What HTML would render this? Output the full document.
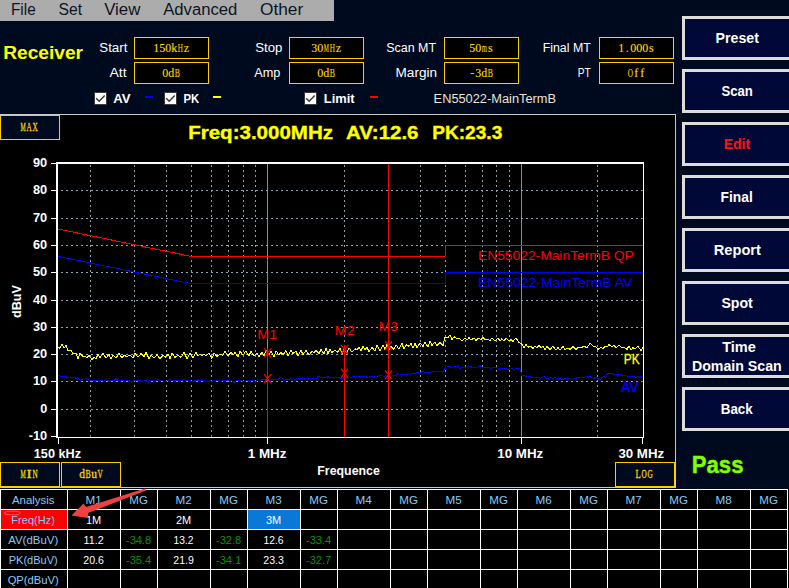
<!DOCTYPE html>
<html><head><meta charset="utf-8"><style>
html,body{margin:0;padding:0;background:#000a1e;width:789px;height:588px;overflow:hidden;}
svg{display:block;}

</style></head><body>
<svg width="789" height="588" viewBox="0 0 789 588"><rect x="0" y="0" width="789" height="588" fill="#000a1e"/>
<rect x="0" y="0" width="334" height="21" fill="#acacac"/>
<text x="11.00" y="14.80" font-size="16" font-weight="normal" fill="#0c1424" text-anchor="start" font-family='"Liberation Sans", sans-serif' textLength="24.7" lengthAdjust="spacingAndGlyphs" >File</text>
<text x="58.60" y="14.80" font-size="16" font-weight="normal" fill="#0c1424" text-anchor="start" font-family='"Liberation Sans", sans-serif' textLength="23.5" lengthAdjust="spacingAndGlyphs" >Set</text>
<text x="104.20" y="14.80" font-size="16" font-weight="normal" fill="#0c1424" text-anchor="start" font-family='"Liberation Sans", sans-serif' textLength="36.2" lengthAdjust="spacingAndGlyphs" >View</text>
<text x="163.20" y="14.80" font-size="16" font-weight="normal" fill="#0c1424" text-anchor="start" font-family='"Liberation Sans", sans-serif' textLength="74.1" lengthAdjust="spacingAndGlyphs" >Advanced</text>
<text x="260.00" y="14.80" font-size="16" font-weight="normal" fill="#0c1424" text-anchor="start" font-family='"Liberation Sans", sans-serif' textLength="43.2" lengthAdjust="spacingAndGlyphs" >Other</text>
<text x="3.20" y="58.80" font-size="19" font-weight="bold" fill="#ffff00" text-anchor="start" font-family='"Liberation Sans", sans-serif' textLength="79.8" lengthAdjust="spacingAndGlyphs" >Receiver</text>
<text x="99.30" y="51.80" font-size="12" font-weight="normal" fill="#ffffff" text-anchor="start" font-family='"Liberation Sans", sans-serif' textLength="28.1" lengthAdjust="spacingAndGlyphs" >Start</text>
<text x="109.40" y="76.80" font-size="12" font-weight="normal" fill="#ffffff" text-anchor="start" font-family='"Liberation Sans", sans-serif' textLength="17.2" lengthAdjust="spacingAndGlyphs" >Att</text>
<text x="255.20" y="51.80" font-size="12" font-weight="normal" fill="#ffffff" text-anchor="start" font-family='"Liberation Sans", sans-serif' textLength="27.2" lengthAdjust="spacingAndGlyphs" >Stop</text>
<text x="254.20" y="76.80" font-size="12" font-weight="normal" fill="#ffffff" text-anchor="start" font-family='"Liberation Sans", sans-serif' textLength="26.1" lengthAdjust="spacingAndGlyphs" >Amp</text>
<text x="386.20" y="51.80" font-size="12" font-weight="normal" fill="#ffffff" text-anchor="start" font-family='"Liberation Sans", sans-serif' textLength="49.9" lengthAdjust="spacingAndGlyphs" >Scan MT</text>
<text x="395.60" y="76.80" font-size="12" font-weight="normal" fill="#ffffff" text-anchor="start" font-family='"Liberation Sans", sans-serif' textLength="41.4" lengthAdjust="spacingAndGlyphs" >Margin</text>
<text x="542.70" y="51.80" font-size="12" font-weight="normal" fill="#ffffff" text-anchor="start" font-family='"Liberation Sans", sans-serif' textLength="48.1" lengthAdjust="spacingAndGlyphs" >Final MT</text>
<text x="577.80" y="76.80" font-size="12" font-weight="normal" fill="#ffffff" text-anchor="start" font-family='"Liberation Sans", sans-serif' textLength="13.0" lengthAdjust="spacingAndGlyphs" >PT</text>
<rect x="134.5" y="37.5" width="74" height="21" fill="#000" stroke="#ffcc00" stroke-width="1"/>
<text x="156.30" y="52.30" font-size="12" font-weight="normal" fill="#ffd800" text-anchor="middle" font-family='"Liberation Serif", serif' stroke="#ffd800" stroke-width="0.12">1</text>
<text x="162.30" y="52.30" font-size="12" font-weight="normal" fill="#ffd800" text-anchor="middle" font-family='"Liberation Serif", serif' stroke="#ffd800" stroke-width="0.12">5</text>
<text x="168.30" y="52.30" font-size="12" font-weight="normal" fill="#ffd800" text-anchor="middle" font-family='"Liberation Serif", serif' stroke="#ffd800" stroke-width="0.12">0</text>
<text x="174.30" y="52.30" font-size="12" font-weight="normal" fill="#ffd800" text-anchor="middle" font-family='"Liberation Serif", serif' stroke="#ffd800" stroke-width="0.12">k</text>
<text x="180.30" y="52.30" font-size="12" font-weight="normal" fill="#ffd800" text-anchor="middle" font-family='"Liberation Serif", serif' textLength="5.2" lengthAdjust="spacingAndGlyphs" stroke="#ffd800" stroke-width="0.12">H</text>
<text x="186.30" y="52.30" font-size="12" font-weight="normal" fill="#ffd800" text-anchor="middle" font-family='"Liberation Serif", serif' stroke="#ffd800" stroke-width="0.12">z</text>
<rect x="134.5" y="62.5" width="74" height="21" fill="#000" stroke="#ffcc00" stroke-width="1"/>
<text x="165.30" y="77.30" font-size="12" font-weight="normal" fill="#ffd800" text-anchor="middle" font-family='"Liberation Serif", serif' stroke="#ffd800" stroke-width="0.12">0</text>
<text x="171.30" y="77.30" font-size="12" font-weight="normal" fill="#ffd800" text-anchor="middle" font-family='"Liberation Serif", serif' stroke="#ffd800" stroke-width="0.12">d</text>
<text x="177.30" y="77.30" font-size="12" font-weight="normal" fill="#ffd800" text-anchor="middle" font-family='"Liberation Serif", serif' textLength="5.2" lengthAdjust="spacingAndGlyphs" stroke="#ffd800" stroke-width="0.12">B</text>
<rect x="289.5" y="37.5" width="74" height="21" fill="#000" stroke="#ffcc00" stroke-width="1"/>
<text x="314.30" y="52.30" font-size="12" font-weight="normal" fill="#ffd800" text-anchor="middle" font-family='"Liberation Serif", serif' stroke="#ffd800" stroke-width="0.12">3</text>
<text x="320.30" y="52.30" font-size="12" font-weight="normal" fill="#ffd800" text-anchor="middle" font-family='"Liberation Serif", serif' stroke="#ffd800" stroke-width="0.12">0</text>
<text x="326.30" y="52.30" font-size="12" font-weight="normal" fill="#ffd800" text-anchor="middle" font-family='"Liberation Serif", serif' textLength="5.2" lengthAdjust="spacingAndGlyphs" stroke="#ffd800" stroke-width="0.12">M</text>
<text x="332.30" y="52.30" font-size="12" font-weight="normal" fill="#ffd800" text-anchor="middle" font-family='"Liberation Serif", serif' textLength="5.2" lengthAdjust="spacingAndGlyphs" stroke="#ffd800" stroke-width="0.12">H</text>
<text x="338.30" y="52.30" font-size="12" font-weight="normal" fill="#ffd800" text-anchor="middle" font-family='"Liberation Serif", serif' stroke="#ffd800" stroke-width="0.12">z</text>
<rect x="289.5" y="62.5" width="74" height="21" fill="#000" stroke="#ffcc00" stroke-width="1"/>
<text x="320.30" y="77.30" font-size="12" font-weight="normal" fill="#ffd800" text-anchor="middle" font-family='"Liberation Serif", serif' stroke="#ffd800" stroke-width="0.12">0</text>
<text x="326.30" y="77.30" font-size="12" font-weight="normal" fill="#ffd800" text-anchor="middle" font-family='"Liberation Serif", serif' stroke="#ffd800" stroke-width="0.12">d</text>
<text x="332.30" y="77.30" font-size="12" font-weight="normal" fill="#ffd800" text-anchor="middle" font-family='"Liberation Serif", serif' textLength="5.2" lengthAdjust="spacingAndGlyphs" stroke="#ffd800" stroke-width="0.12">B</text>
<rect x="444.5" y="37.5" width="74" height="21" fill="#000" stroke="#ffcc00" stroke-width="1"/>
<text x="472.30" y="52.30" font-size="12" font-weight="normal" fill="#ffd800" text-anchor="middle" font-family='"Liberation Serif", serif' stroke="#ffd800" stroke-width="0.12">5</text>
<text x="478.30" y="52.30" font-size="12" font-weight="normal" fill="#ffd800" text-anchor="middle" font-family='"Liberation Serif", serif' stroke="#ffd800" stroke-width="0.12">0</text>
<text x="484.30" y="52.30" font-size="12" font-weight="normal" fill="#ffd800" text-anchor="middle" font-family='"Liberation Serif", serif' textLength="5.2" lengthAdjust="spacingAndGlyphs" stroke="#ffd800" stroke-width="0.12">m</text>
<text x="490.30" y="52.30" font-size="12" font-weight="normal" fill="#ffd800" text-anchor="middle" font-family='"Liberation Serif", serif' stroke="#ffd800" stroke-width="0.12">s</text>
<rect x="444.5" y="62.5" width="74" height="21" fill="#000" stroke="#ffcc00" stroke-width="1"/>
<text x="472.30" y="77.30" font-size="12" font-weight="normal" fill="#ffd800" text-anchor="middle" font-family='"Liberation Serif", serif' stroke="#ffd800" stroke-width="0.12">-</text>
<text x="478.30" y="77.30" font-size="12" font-weight="normal" fill="#ffd800" text-anchor="middle" font-family='"Liberation Serif", serif' stroke="#ffd800" stroke-width="0.12">3</text>
<text x="484.30" y="77.30" font-size="12" font-weight="normal" fill="#ffd800" text-anchor="middle" font-family='"Liberation Serif", serif' stroke="#ffd800" stroke-width="0.12">d</text>
<text x="490.30" y="77.30" font-size="12" font-weight="normal" fill="#ffd800" text-anchor="middle" font-family='"Liberation Serif", serif' textLength="5.2" lengthAdjust="spacingAndGlyphs" stroke="#ffd800" stroke-width="0.12">B</text>
<rect x="599.5" y="37.5" width="74" height="21" fill="#000" stroke="#ffcc00" stroke-width="1"/>
<text x="621.30" y="52.30" font-size="12" font-weight="normal" fill="#ffd800" text-anchor="middle" font-family='"Liberation Serif", serif' stroke="#ffd800" stroke-width="0.12">1</text>
<text x="627.30" y="52.30" font-size="12" font-weight="normal" fill="#ffd800" text-anchor="middle" font-family='"Liberation Serif", serif' stroke="#ffd800" stroke-width="0.12">.</text>
<text x="633.30" y="52.30" font-size="12" font-weight="normal" fill="#ffd800" text-anchor="middle" font-family='"Liberation Serif", serif' stroke="#ffd800" stroke-width="0.12">0</text>
<text x="639.30" y="52.30" font-size="12" font-weight="normal" fill="#ffd800" text-anchor="middle" font-family='"Liberation Serif", serif' stroke="#ffd800" stroke-width="0.12">0</text>
<text x="645.30" y="52.30" font-size="12" font-weight="normal" fill="#ffd800" text-anchor="middle" font-family='"Liberation Serif", serif' stroke="#ffd800" stroke-width="0.12">0</text>
<text x="651.30" y="52.30" font-size="12" font-weight="normal" fill="#ffd800" text-anchor="middle" font-family='"Liberation Serif", serif' stroke="#ffd800" stroke-width="0.12">s</text>
<rect x="599.5" y="62.5" width="74" height="21" fill="#000" stroke="#ffcc00" stroke-width="1"/>
<text x="630.30" y="77.30" font-size="12" font-weight="normal" fill="#ffd800" text-anchor="middle" font-family='"Liberation Serif", serif' textLength="5.2" lengthAdjust="spacingAndGlyphs" stroke="#ffd800" stroke-width="0.12">O</text>
<text x="636.30" y="77.30" font-size="12" font-weight="normal" fill="#ffd800" text-anchor="middle" font-family='"Liberation Serif", serif' stroke="#ffd800" stroke-width="0.12">f</text>
<text x="642.30" y="77.30" font-size="12" font-weight="normal" fill="#ffd800" text-anchor="middle" font-family='"Liberation Serif", serif' stroke="#ffd800" stroke-width="0.12">f</text>
<rect x="94.5" y="92.5" width="12" height="12" fill="#ffffff" stroke="#3a3a3a" stroke-width="1"/>
<polyline points="96.2,98.2 99.2,101.2 104.7,95.4" fill="none" stroke="#3a3a3a" stroke-width="1.5"/>
<text x="113.30" y="102.60" font-size="12" font-weight="bold" fill="#ffffff" text-anchor="start" font-family='"Liberation Sans", sans-serif' textLength="17.4" lengthAdjust="spacingAndGlyphs" >AV</text>
<rect x="145" y="96" width="8" height="2" fill="#0000ff"/>
<rect x="164.5" y="92.5" width="12" height="12" fill="#ffffff" stroke="#3a3a3a" stroke-width="1"/>
<polyline points="166.2,98.2 169.2,101.2 174.7,95.4" fill="none" stroke="#3a3a3a" stroke-width="1.5"/>
<text x="183.50" y="102.60" font-size="12" font-weight="bold" fill="#ffffff" text-anchor="start" font-family='"Liberation Sans", sans-serif' textLength="15.7" lengthAdjust="spacingAndGlyphs" >PK</text>
<rect x="213" y="96" width="8" height="2" fill="#ffff00"/>
<rect x="304.5" y="92.5" width="12" height="12" fill="#ffffff" stroke="#3a3a3a" stroke-width="1"/>
<polyline points="306.2,98.2 309.2,101.2 314.7,95.4" fill="none" stroke="#3a3a3a" stroke-width="1.5"/>
<text x="323.80" y="102.60" font-size="12" font-weight="bold" fill="#ffffff" text-anchor="start" font-family='"Liberation Sans", sans-serif' textLength="30.8" lengthAdjust="spacingAndGlyphs" >Limit</text>
<rect x="370" y="96" width="8" height="2" fill="#ff0000"/>
<text x="433.60" y="102.80" font-size="12" font-weight="normal" fill="#ebe3d3" text-anchor="start" font-family='"Liberation Sans", sans-serif' textLength="122.4" lengthAdjust="spacingAndGlyphs" >EN55022-MainTermB</text>
<rect x="0" y="114" width="676" height="374" fill="#c8c8c8"/>
<rect x="0" y="115" width="675" height="372" fill="#000000"/>
<rect x="0.5" y="115.5" width="59" height="24" fill="#000a1e" stroke="#ffcc00" stroke-width="1"/>
<text x="23.20" y="131.10" font-size="11.5" font-weight="normal" fill="#ffd400" text-anchor="middle" font-family='"Liberation Serif", serif' textLength="5.2" lengthAdjust="spacingAndGlyphs" stroke="#ffd400" stroke-width="0.3">M</text>
<text x="29.20" y="131.10" font-size="11.5" font-weight="normal" fill="#ffd400" text-anchor="middle" font-family='"Liberation Serif", serif' textLength="5.2" lengthAdjust="spacingAndGlyphs" stroke="#ffd400" stroke-width="0.3">A</text>
<text x="35.20" y="131.10" font-size="11.5" font-weight="normal" fill="#ffd400" text-anchor="middle" font-family='"Liberation Serif", serif' textLength="5.2" lengthAdjust="spacingAndGlyphs" stroke="#ffd400" stroke-width="0.3">X</text>
<rect x="0.5" y="462.5" width="59" height="24" fill="#000a1e" stroke="#ffcc00" stroke-width="1"/>
<text x="23.20" y="478.10" font-size="11.5" font-weight="normal" fill="#ffd400" text-anchor="middle" font-family='"Liberation Serif", serif' textLength="5.2" lengthAdjust="spacingAndGlyphs" stroke="#ffd400" stroke-width="0.3">M</text>
<text x="29.20" y="478.10" font-size="11.5" font-weight="normal" fill="#ffd400" text-anchor="middle" font-family='"Liberation Serif", serif' textLength="5.2" lengthAdjust="spacingAndGlyphs" stroke="#ffd400" stroke-width="0.3">I</text>
<text x="35.20" y="478.10" font-size="11.5" font-weight="normal" fill="#ffd400" text-anchor="middle" font-family='"Liberation Serif", serif' textLength="5.2" lengthAdjust="spacingAndGlyphs" stroke="#ffd400" stroke-width="0.3">N</text>
<rect x="61.5" y="462.5" width="59" height="24" fill="#000a1e" stroke="#ffcc00" stroke-width="1"/>
<text x="82.10" y="478.10" font-size="11.5" font-weight="normal" fill="#ffd400" text-anchor="middle" font-family='"Liberation Serif", serif' stroke="#ffd400" stroke-width="0.3">d</text>
<text x="88.10" y="478.10" font-size="11.5" font-weight="normal" fill="#ffd400" text-anchor="middle" font-family='"Liberation Serif", serif' textLength="5.2" lengthAdjust="spacingAndGlyphs" stroke="#ffd400" stroke-width="0.3">B</text>
<text x="94.10" y="478.10" font-size="11.5" font-weight="normal" fill="#ffd400" text-anchor="middle" font-family='"Liberation Serif", serif' stroke="#ffd400" stroke-width="0.3">u</text>
<text x="100.10" y="478.10" font-size="11.5" font-weight="normal" fill="#ffd400" text-anchor="middle" font-family='"Liberation Serif", serif' textLength="5.2" lengthAdjust="spacingAndGlyphs" stroke="#ffd400" stroke-width="0.3">V</text>
<rect x="615.5" y="462.5" width="59" height="24" fill="#000a1e" stroke="#ffcc00" stroke-width="1"/>
<text x="638.20" y="478.10" font-size="11.5" font-weight="normal" fill="#ffd400" text-anchor="middle" font-family='"Liberation Serif", serif' textLength="5.2" lengthAdjust="spacingAndGlyphs" stroke="#ffd400" stroke-width="0.3">L</text>
<text x="644.20" y="478.10" font-size="11.5" font-weight="normal" fill="#ffd400" text-anchor="middle" font-family='"Liberation Serif", serif' textLength="5.2" lengthAdjust="spacingAndGlyphs" stroke="#ffd400" stroke-width="0.3">O</text>
<text x="650.20" y="478.10" font-size="11.5" font-weight="normal" fill="#ffd400" text-anchor="middle" font-family='"Liberation Serif", serif' textLength="5.2" lengthAdjust="spacingAndGlyphs" stroke="#ffd400" stroke-width="0.3">G</text>
<text x="188.20" y="139.30" font-size="18" font-weight="bold" fill="#ffff00" text-anchor="start" font-family='"Liberation Sans", sans-serif' textLength="144.8" lengthAdjust="spacingAndGlyphs" stroke="#ffff00" stroke-width="0.35">Freq:3.000MHz</text>
<text x="346.00" y="139.30" font-size="18" font-weight="bold" fill="#ffff00" text-anchor="start" font-family='"Liberation Sans", sans-serif' textLength="72.5" lengthAdjust="spacingAndGlyphs" stroke="#ffff00" stroke-width="0.35">AV:12.6</text>
<text x="432.20" y="139.30" font-size="18" font-weight="bold" fill="#ffff00" text-anchor="start" font-family='"Liberation Sans", sans-serif' textLength="70.1" lengthAdjust="spacingAndGlyphs" stroke="#ffff00" stroke-width="0.35">PK:23.3</text>
<text x="478.00" y="260.10" font-size="13" font-weight="normal" fill="#ff0000" text-anchor="start" font-family='"Liberation Sans", sans-serif' textLength="155.8" lengthAdjust="spacingAndGlyphs" >EN55022-MainTermB QP</text>
<text x="478.00" y="286.80" font-size="13" font-weight="normal" fill="#0000ff" text-anchor="start" font-family='"Liberation Sans", sans-serif' textLength="154.4" lengthAdjust="spacingAndGlyphs" >EN55022-MainTermB AV</text>
<line x1="90.5" y1="165" x2="90.5" y2="436.6" stroke="#9c9c9c" stroke-width="1" stroke-dasharray="2 3"/>
<line x1="134.5" y1="165" x2="134.5" y2="436.6" stroke="#9c9c9c" stroke-width="1" stroke-dasharray="2 3"/>
<line x1="166.5" y1="165" x2="166.5" y2="436.6" stroke="#9c9c9c" stroke-width="1" stroke-dasharray="2 3"/>
<line x1="191.5" y1="165" x2="191.5" y2="436.6" stroke="#9c9c9c" stroke-width="1" stroke-dasharray="2 3"/>
<line x1="211.5" y1="165" x2="211.5" y2="436.6" stroke="#9c9c9c" stroke-width="1" stroke-dasharray="2 3"/>
<line x1="228.5" y1="165" x2="228.5" y2="436.6" stroke="#9c9c9c" stroke-width="1" stroke-dasharray="2 3"/>
<line x1="243.5" y1="165" x2="243.5" y2="436.6" stroke="#9c9c9c" stroke-width="1" stroke-dasharray="2 3"/>
<line x1="255.5" y1="165" x2="255.5" y2="436.6" stroke="#9c9c9c" stroke-width="1" stroke-dasharray="2 3"/>
<line x1="267.5" y1="163" x2="267.5" y2="436.6" stroke="#7890b0" stroke-width="1"/>
<line x1="344.5" y1="165" x2="344.5" y2="436.6" stroke="#9c9c9c" stroke-width="1" stroke-dasharray="2 3"/>
<line x1="388.5" y1="165" x2="388.5" y2="436.6" stroke="#9c9c9c" stroke-width="1" stroke-dasharray="2 3"/>
<line x1="420.5" y1="165" x2="420.5" y2="436.6" stroke="#9c9c9c" stroke-width="1" stroke-dasharray="2 3"/>
<line x1="445.5" y1="165" x2="445.5" y2="436.6" stroke="#9c9c9c" stroke-width="1" stroke-dasharray="2 3"/>
<line x1="465.5" y1="165" x2="465.5" y2="436.6" stroke="#9c9c9c" stroke-width="1" stroke-dasharray="2 3"/>
<line x1="482.5" y1="165" x2="482.5" y2="436.6" stroke="#9c9c9c" stroke-width="1" stroke-dasharray="2 3"/>
<line x1="496.5" y1="165" x2="496.5" y2="436.6" stroke="#9c9c9c" stroke-width="1" stroke-dasharray="2 3"/>
<line x1="509.5" y1="165" x2="509.5" y2="436.6" stroke="#9c9c9c" stroke-width="1" stroke-dasharray="2 3"/>
<line x1="521.5" y1="163" x2="521.5" y2="436.6" stroke="#7890b0" stroke-width="1"/>
<line x1="597.5" y1="165" x2="597.5" y2="436.6" stroke="#9c9c9c" stroke-width="1" stroke-dasharray="2 3"/>
<line x1="61" y1="190.5" x2="642.6" y2="190.5" stroke="#92a6bc" stroke-width="1" stroke-dasharray="2 3"/>
<line x1="61" y1="218.5" x2="642.6" y2="218.5" stroke="#92a6bc" stroke-width="1" stroke-dasharray="2 3"/>
<line x1="61" y1="245.5" x2="642.6" y2="245.5" stroke="#92a6bc" stroke-width="1" stroke-dasharray="2 3"/>
<line x1="61" y1="272.5" x2="642.6" y2="272.5" stroke="#92a6bc" stroke-width="1" stroke-dasharray="2 3"/>
<line x1="61" y1="300.5" x2="642.6" y2="300.5" stroke="#92a6bc" stroke-width="1" stroke-dasharray="2 3"/>
<line x1="61" y1="327.5" x2="642.6" y2="327.5" stroke="#92a6bc" stroke-width="1" stroke-dasharray="2 3"/>
<line x1="61" y1="354.5" x2="642.6" y2="354.5" stroke="#92a6bc" stroke-width="1" stroke-dasharray="2 3"/>
<line x1="61" y1="381.5" x2="642.6" y2="381.5" stroke="#92a6bc" stroke-width="1" stroke-dasharray="2 3"/>
<line x1="61" y1="409.5" x2="642.6" y2="409.5" stroke="#92a6bc" stroke-width="1" stroke-dasharray="2 3"/>
<rect x="56" y="162" width="588" height="2" fill="#ffffff"/>
<rect x="56" y="162" width="2" height="276" fill="#ffffff"/>
<rect x="643" y="162" width="1" height="276" fill="#ffffff"/>
<rect x="56" y="437" width="588" height="1" fill="#ffffff"/>
<rect x="51" y="163" width="6" height="1" fill="#ffffff"/>
<text x="47.20" y="167.20" font-size="12.5" font-weight="bold" fill="#ffffff" text-anchor="end" font-family='"Liberation Sans", sans-serif' textLength="14.2" lengthAdjust="spacingAndGlyphs" >90</text>
<rect x="51" y="190" width="6" height="1" fill="#ffffff"/>
<text x="47.20" y="194.20" font-size="12.5" font-weight="bold" fill="#ffffff" text-anchor="end" font-family='"Liberation Sans", sans-serif' textLength="14.2" lengthAdjust="spacingAndGlyphs" >80</text>
<rect x="51" y="218" width="6" height="1" fill="#ffffff"/>
<text x="47.20" y="222.20" font-size="12.5" font-weight="bold" fill="#ffffff" text-anchor="end" font-family='"Liberation Sans", sans-serif' textLength="14.2" lengthAdjust="spacingAndGlyphs" >70</text>
<rect x="51" y="245" width="6" height="1" fill="#ffffff"/>
<text x="47.20" y="249.20" font-size="12.5" font-weight="bold" fill="#ffffff" text-anchor="end" font-family='"Liberation Sans", sans-serif' textLength="14.2" lengthAdjust="spacingAndGlyphs" >60</text>
<rect x="51" y="272" width="6" height="1" fill="#ffffff"/>
<text x="47.20" y="276.20" font-size="12.5" font-weight="bold" fill="#ffffff" text-anchor="end" font-family='"Liberation Sans", sans-serif' textLength="14.2" lengthAdjust="spacingAndGlyphs" >50</text>
<rect x="51" y="300" width="6" height="1" fill="#ffffff"/>
<text x="47.20" y="304.20" font-size="12.5" font-weight="bold" fill="#ffffff" text-anchor="end" font-family='"Liberation Sans", sans-serif' textLength="14.2" lengthAdjust="spacingAndGlyphs" >40</text>
<rect x="51" y="327" width="6" height="1" fill="#ffffff"/>
<text x="47.20" y="331.20" font-size="12.5" font-weight="bold" fill="#ffffff" text-anchor="end" font-family='"Liberation Sans", sans-serif' textLength="14.2" lengthAdjust="spacingAndGlyphs" >30</text>
<rect x="51" y="354" width="6" height="1" fill="#ffffff"/>
<text x="47.20" y="358.20" font-size="12.5" font-weight="bold" fill="#ffffff" text-anchor="end" font-family='"Liberation Sans", sans-serif' textLength="14.2" lengthAdjust="spacingAndGlyphs" >20</text>
<rect x="51" y="381" width="6" height="1" fill="#ffffff"/>
<text x="47.20" y="385.20" font-size="12.5" font-weight="bold" fill="#ffffff" text-anchor="end" font-family='"Liberation Sans", sans-serif' textLength="14.2" lengthAdjust="spacingAndGlyphs" >10</text>
<rect x="51" y="409" width="6" height="1" fill="#ffffff"/>
<text x="47.20" y="413.20" font-size="12.5" font-weight="bold" fill="#ffffff" text-anchor="end" font-family='"Liberation Sans", sans-serif' textLength="7.0" lengthAdjust="spacingAndGlyphs" >0</text>
<rect x="51" y="436" width="6" height="1" fill="#ffffff"/>
<text x="47.20" y="440.20" font-size="12.5" font-weight="bold" fill="#ffffff" text-anchor="end" font-family='"Liberation Sans", sans-serif' textLength="18.5" lengthAdjust="spacingAndGlyphs" >-10</text>
<rect x="58" y="438" width="1" height="6" fill="#ffffff"/>
<rect x="267" y="438" width="1" height="6" fill="#ffffff"/>
<rect x="521" y="438" width="1" height="6" fill="#ffffff"/>
<rect x="642" y="438" width="1" height="6" fill="#ffffff"/>
<text x="33.80" y="458.00" font-size="12.5" font-weight="bold" fill="#ffffff" text-anchor="start" font-family='"Liberation Sans", sans-serif' textLength="47.2" lengthAdjust="spacingAndGlyphs" >150 kHz</text>
<text x="247.70" y="458.00" font-size="12.5" font-weight="bold" fill="#ffffff" text-anchor="start" font-family='"Liberation Sans", sans-serif' textLength="38.8" lengthAdjust="spacingAndGlyphs" >1 MHz</text>
<text x="497.30" y="458.00" font-size="12.5" font-weight="bold" fill="#ffffff" text-anchor="start" font-family='"Liberation Sans", sans-serif' textLength="46.0" lengthAdjust="spacingAndGlyphs" >10 MHz</text>
<text x="618.40" y="458.00" font-size="12.5" font-weight="bold" fill="#ffffff" text-anchor="start" font-family='"Liberation Sans", sans-serif' textLength="45.8" lengthAdjust="spacingAndGlyphs" >30 MHz</text>
<text x="317.30" y="475.30" font-size="12.5" font-weight="bold" fill="#ffffff" text-anchor="start" font-family='"Liberation Sans", sans-serif' textLength="62.5" lengthAdjust="spacingAndGlyphs" >Frequence</text>
<text x="0" y="0" font-size="12" font-weight="bold" fill="#ffffff" font-family='"Liberation Sans", sans-serif' textLength="33" lengthAdjust="spacingAndGlyphs" text-anchor="middle" transform="translate(21.4,301.5) rotate(-90)">dBuV</text>
<polyline points="58.5,229.1 191.2,256.4 445.0,256.4 445.0,245.5 642.5,245.5" fill="none" stroke="#ff0000" stroke-width="1" shape-rendering="crispEdges"/>
<polyline points="58.5,256.4 191.2,283.7 445.0,283.7 445.0,272.8 642.5,272.8" fill="none" stroke="#0000ff" stroke-width="1" shape-rendering="crispEdges"/>
<polyline points="58.0,347.2 60.0,348.3 62.0,344.2 64.0,348.2 66.0,345.2 68.0,350.8 71.0,350.0 73.0,353.4 76.0,353.6 78.0,358.5 80.0,353.4 83.0,356.6 85.0,355.9 87.0,358.1 89.0,355.1 92.0,359.9 94.0,356.9 96.0,358.6 98.0,354.4 100.0,357.9 103.0,353.2 106.0,358.2 109.0,354.4 111.0,358.8 113.0,355.3 116.0,358.0 119.0,353.3 122.0,358.2 124.0,355.1 127.0,356.8 130.0,355.0 133.0,357.6 135.0,353.1 138.0,357.3 141.0,353.6 144.0,356.5 146.0,352.5 149.0,358.4 151.0,355.2 154.0,358.2 157.0,354.5 160.0,358.9 163.0,355.3 166.0,357.3 168.0,353.8 170.0,358.5 172.0,353.1 175.0,357.4 178.0,355.1 181.0,357.3 184.0,352.5 187.0,358.6 190.0,352.9 193.0,358.0 196.0,352.0 198.0,356.0 200.0,354.2 202.0,355.7 204.0,354.0 206.0,356.0 209.0,352.8 212.0,358.4 214.0,353.2 217.0,356.5 220.0,354.1 223.0,355.4 225.0,351.3 228.0,355.6 231.0,352.3 233.0,355.0 235.0,352.5 238.0,356.8 240.0,351.3 243.0,355.2 246.0,350.9 249.0,356.1 251.0,351.1 254.0,356.0 257.0,353.4 259.0,356.7 262.0,352.0 264.0,355.9 266.0,350.5 269.0,354.6 271.0,350.9 274.0,356.9 276.0,350.8 279.0,355.3 281.0,351.7 283.0,355.1 286.0,350.6 288.0,355.7 291.0,350.0 293.0,353.6 296.0,351.0 298.0,355.9 301.0,350.4 303.0,354.7 306.0,350.2 309.0,355.2 312.0,351.1 314.0,352.7 316.0,350.1 319.0,353.8 321.0,349.4 324.0,354.1 326.0,348.1 328.0,354.2 330.0,349.0 332.0,352.6 335.0,350.0 338.0,352.4 340.0,347.8 342.0,353.8 344.0,349.4 347.0,353.0 349.0,347.7 352.0,352.2 355.0,348.7 357.0,349.9 359.0,347.3 361.0,351.0 363.0,346.1 365.0,349.4 367.0,347.5 369.0,351.5 372.0,347.3 375.0,351.3 377.0,345.0 380.0,351.2 383.0,344.9 385.0,349.8 387.0,344.5 389.0,349.7 391.0,346.3 394.0,349.3 396.0,344.7 399.0,349.1 402.0,343.5 404.0,349.3 406.0,344.8 409.0,346.3 411.0,343.6 413.0,348.2 415.0,343.5 417.0,347.6 420.0,342.8 423.0,346.5 425.0,341.8 428.0,347.3 430.0,340.9 432.0,345.4 435.0,341.7 437.0,345.7 440.0,342.4 443.0,345.5 445.0,337.4 448.0,337.6 450.0,335.0 452.0,339.4 454.0,336.7 457.0,339.0 459.0,337.9 462.0,341.1 465.0,337.9 467.0,340.1 469.0,337.3 471.0,340.1 474.0,337.9 476.0,340.4 479.0,337.9 481.0,340.0 483.0,337.2 485.0,340.0 488.0,339.1 490.0,340.5 492.0,337.7 495.0,340.9 498.0,338.1 500.0,340.8 502.0,338.7 504.0,340.9 506.0,338.5 509.0,340.7 511.0,339.7 513.0,341.5 516.0,338.0 519.0,342.6 522.0,344.3 524.0,347.5 526.0,344.0 528.0,347.3 530.0,345.8 533.0,348.4 535.0,346.0 537.0,348.1 539.0,345.0 541.0,347.9 543.0,346.3 545.0,350.0 547.0,346.3 550.0,349.8 553.0,346.0 556.0,350.2 558.0,347.5 560.0,349.9 563.0,346.6 565.0,349.4 568.0,348.0 570.0,349.4 573.0,346.3 576.0,349.4 579.0,346.9 581.0,347.8 584.0,346.2 587.0,347.8 590.0,343.3 593.0,346.0 595.0,346.2 598.0,349.3 601.0,347.3 603.0,348.8 605.0,346.6 607.0,347.1 609.0,344.6 612.0,346.6 614.0,345.4 616.0,347.9 619.0,344.8 622.0,347.8 624.0,346.9 627.0,349.5 629.0,345.7 631.0,350.0 633.0,347.6 635.0,349.0 638.0,346.4 641.0,350.8 643.0,347.3" fill="none" stroke="#ffff00" stroke-width="1" shape-rendering="crispEdges"/>
<polyline points="58.0,375.3 60.0,376.1 62.0,376.2 64.0,376.3 66.0,376.7 68.0,377.9 70.0,377.2 72.0,377.6 74.0,377.7 76.0,378.1 78.0,377.9 80.0,380.2 82.0,379.2 84.0,380.0 86.0,378.3 88.0,379.9 90.0,380.3 92.0,380.1 94.0,380.1 96.0,380.6 98.0,380.9 100.0,380.6 102.0,380.3 104.0,380.6 106.0,379.7 108.0,380.6 110.0,382.0 112.0,380.2 114.0,380.4 116.0,378.7 118.0,380.4 120.0,380.4 122.0,380.2 124.0,380.4 126.0,380.4 128.0,380.3 130.0,381.3 132.0,382.3 134.0,380.4 136.0,380.4 138.0,380.0 140.0,380.6 142.0,381.6 144.0,380.7 146.0,380.5 148.0,382.3 150.0,380.6 152.0,380.3 154.0,380.6 156.0,380.7 158.0,378.9 160.0,380.4 162.0,380.5 164.0,381.7 166.0,381.9 168.0,380.5 170.0,379.5 172.0,380.7 174.0,380.6 176.0,380.7 178.0,380.6 180.0,379.8 182.0,380.9 184.0,379.3 186.0,380.7 188.0,380.7 190.0,380.5 192.0,381.5 194.0,380.9 196.0,380.7 198.0,379.8 200.0,380.8 202.0,381.0 204.0,380.6 206.0,381.0 208.0,381.2 210.0,380.6 212.0,381.2 214.0,380.9 216.0,381.1 218.0,379.8 220.0,381.2 222.0,381.0 224.0,380.9 226.0,380.7 228.0,380.8 230.0,381.1 232.0,380.8 234.0,382.4 236.0,380.1 238.0,380.9 240.0,380.5 242.0,381.0 244.0,381.2 246.0,381.1 248.0,380.6 250.0,381.2 252.0,379.8 254.0,380.7 256.0,382.3 258.0,379.1 260.0,380.2 262.0,379.8 264.0,379.2 266.0,379.7 268.0,379.5 270.0,380.3 272.0,379.7 274.0,379.5 276.0,379.2 278.0,379.7 280.0,377.6 282.0,377.9 284.0,380.9 286.0,379.3 288.0,379.4 290.0,378.9 292.0,379.2 294.0,380.6 296.0,378.9 298.0,378.0 300.0,379.1 302.0,377.8 304.0,378.6 306.0,378.4 308.0,378.4 310.0,378.5 312.0,378.6 314.0,378.5 316.0,378.9 318.0,376.7 320.0,376.8 322.0,378.1 324.0,377.3 326.0,378.0 328.0,376.6 330.0,378.1 332.0,377.6 334.0,377.6 336.0,377.8 338.0,377.9 340.0,377.9 342.0,378.3 344.0,377.7 346.0,377.6 348.0,377.3 350.0,377.2 352.0,377.0 354.0,376.4 356.0,376.0 358.0,376.8 360.0,376.7 362.0,376.1 364.0,377.1 366.0,376.5 368.0,378.0 370.0,376.7 372.0,376.6 374.0,377.3 376.0,376.3 378.0,376.1 380.0,375.4 382.0,375.2 384.0,376.4 386.0,375.8 388.0,376.0 390.0,375.5 392.0,375.7 394.0,375.6 396.0,375.9 398.0,373.2 400.0,374.9 402.0,374.3 404.0,374.5 406.0,374.9 408.0,373.7 410.0,374.2 412.0,373.7 414.0,373.4 416.0,373.0 418.0,372.6 420.0,373.9 422.0,371.0 424.0,372.2 426.0,372.4 428.0,372.0 430.0,372.2 432.0,371.7 434.0,372.1 436.0,371.4 438.0,371.8 440.0,371.4 442.0,371.7 444.0,371.1 446.0,365.6 448.0,366.7 450.0,366.2 452.0,367.4 454.0,366.7 456.0,366.7 458.0,365.2 460.0,368.4 462.0,367.2 464.0,367.2 466.0,368.0 468.0,367.2 470.0,365.9 472.0,367.3 474.0,367.1 476.0,367.4 478.0,366.4 480.0,365.7 482.0,367.4 484.0,367.8 486.0,367.8 488.0,367.7 490.0,368.0 492.0,368.0 494.0,367.8 496.0,368.0 498.0,367.9 500.0,369.3 502.0,368.3 504.0,368.5 506.0,368.3 508.0,369.5 510.0,369.6 512.0,368.3 514.0,370.1 516.0,368.4 518.0,368.7 520.0,368.6 522.0,375.7 524.0,375.7 526.0,376.6 528.0,376.0 530.0,376.2 532.0,377.5 534.0,378.0 536.0,377.2 538.0,377.0 540.0,378.2 542.0,377.6 544.0,375.9 546.0,379.0 548.0,378.2 550.0,377.7 552.0,378.0 554.0,378.0 556.0,377.9 558.0,378.4 560.0,378.6 562.0,379.8 564.0,378.9 566.0,378.7 568.0,378.8 570.0,379.0 572.0,379.2 574.0,378.8 576.0,378.2 578.0,377.3 580.0,377.9 582.0,377.4 584.0,377.5 586.0,376.7 588.0,376.7 590.0,376.6 592.0,377.3 594.0,378.5 596.0,377.0 598.0,378.7 600.0,380.5 602.0,377.5 604.0,376.8 606.0,375.2 608.0,373.7 610.0,373.8 612.0,373.1 614.0,374.3 616.0,374.2 618.0,375.3 620.0,374.1 622.0,375.6 624.0,375.9 626.0,375.7 628.0,376.4 630.0,376.2 632.0,376.3 634.0,376.7 636.0,377.4 638.0,376.6 640.0,376.7 642.0,377.3" fill="none" stroke="#0000ff" stroke-width="1" shape-rendering="crispEdges"/>
<text x="623.80" y="364.20" font-size="14" font-weight="normal" fill="#ffff00" text-anchor="start" font-family='"Liberation Sans", sans-serif' textLength="15.9" lengthAdjust="spacingAndGlyphs" stroke="#ffff00" stroke-width="0.3">PK</text>
<text x="621.00" y="391.80" font-size="14" font-weight="normal" fill="#0000ff" text-anchor="start" font-family='"Liberation Sans", sans-serif' textLength="17.5" lengthAdjust="spacingAndGlyphs" stroke="#0000ff" stroke-width="0.3">AV</text>
<line x1="267.5" y1="348.49260000000004" x2="267.5" y2="437" stroke="#ff0000" stroke-width="1"/>
<path d="M264.0,348.49260000000004 L271.0,357.49260000000004 M271.0,348.49260000000004 L264.0,357.49260000000004" stroke="#ff0000" stroke-width="1.2" fill="none"/>
<path d="M264.0,374.1452 L271.0,383.1452 M271.0,374.1452 L264.0,383.1452" stroke="#ff0000" stroke-width="1.2" fill="none"/>
<text x="257.30" y="339.00" font-size="13.5" font-weight="normal" fill="#ff0000" text-anchor="start" font-family='"Liberation Sans", sans-serif' textLength="19.8" lengthAdjust="spacingAndGlyphs" >M1</text>
<line x1="344.5" y1="344.94489999999996" x2="344.5" y2="437" stroke="#ff0000" stroke-width="1"/>
<path d="M341.0,344.94489999999996 L348.0,353.94489999999996 M348.0,344.94489999999996 L341.0,353.94489999999996" stroke="#ff0000" stroke-width="1.2" fill="none"/>
<path d="M341.0,368.68719999999996 L348.0,377.68719999999996 M348.0,368.68719999999996 L341.0,377.68719999999996" stroke="#ff0000" stroke-width="1.2" fill="none"/>
<text x="334.80" y="334.90" font-size="13.5" font-weight="normal" fill="#ff0000" text-anchor="start" font-family='"Liberation Sans", sans-serif' textLength="19.8" lengthAdjust="spacingAndGlyphs" >M2</text>
<line x1="388.5" y1="164" x2="388.5" y2="437" stroke="#ff0000" stroke-width="1"/>
<path d="M385.0,341.1243 L392.0,350.1243 M392.0,341.1243 L385.0,350.1243" stroke="#ff0000" stroke-width="1.2" fill="none"/>
<path d="M385.0,370.32460000000003 L392.0,379.32460000000003 M392.0,370.32460000000003 L385.0,379.32460000000003" stroke="#ff0000" stroke-width="1.2" fill="none"/>
<text x="378.70" y="330.80" font-size="13.5" font-weight="normal" fill="#ff0000" text-anchor="start" font-family='"Liberation Sans", sans-serif' textLength="19.2" lengthAdjust="spacingAndGlyphs" >M3</text>
<rect x="682" y="16" width="120" height="44" fill="#dcdcdc"/>
<rect x="685" y="19" width="120" height="38" fill="#000838"/>
<text x="715.60" y="43.00" font-size="14" font-weight="bold" fill="#ffffff" text-anchor="start" font-family='"Liberation Sans", sans-serif' textLength="43.3" lengthAdjust="spacingAndGlyphs" >Preset</text>
<rect x="682" y="69" width="120" height="44" fill="#dcdcdc"/>
<rect x="685" y="72" width="120" height="38" fill="#000838"/>
<text x="721.40" y="96.00" font-size="14" font-weight="bold" fill="#ffffff" text-anchor="start" font-family='"Liberation Sans", sans-serif' textLength="31.4" lengthAdjust="spacingAndGlyphs" >Scan</text>
<rect x="682" y="122" width="120" height="44" fill="#dcdcdc"/>
<rect x="685" y="125" width="120" height="38" fill="#000838"/>
<text x="723.70" y="149.00" font-size="14" font-weight="bold" fill="#ff1010" text-anchor="start" font-family='"Liberation Sans", sans-serif' textLength="26.5" lengthAdjust="spacingAndGlyphs" >Edit</text>
<rect x="682" y="175" width="120" height="44" fill="#dcdcdc"/>
<rect x="685" y="178" width="120" height="38" fill="#000838"/>
<text x="720.60" y="202.00" font-size="14" font-weight="bold" fill="#ffffff" text-anchor="start" font-family='"Liberation Sans", sans-serif' textLength="32.2" lengthAdjust="spacingAndGlyphs" >Final</text>
<rect x="682" y="228" width="120" height="44" fill="#dcdcdc"/>
<rect x="685" y="231" width="120" height="38" fill="#000838"/>
<text x="713.80" y="255.00" font-size="14" font-weight="bold" fill="#ffffff" text-anchor="start" font-family='"Liberation Sans", sans-serif' textLength="47.1" lengthAdjust="spacingAndGlyphs" >Report</text>
<rect x="682" y="281" width="120" height="44" fill="#dcdcdc"/>
<rect x="685" y="284" width="120" height="38" fill="#000838"/>
<text x="721.40" y="308.00" font-size="14" font-weight="bold" fill="#ffffff" text-anchor="start" font-family='"Liberation Sans", sans-serif' textLength="31.4" lengthAdjust="spacingAndGlyphs" >Spot</text>
<rect x="682" y="334" width="120" height="44" fill="#dcdcdc"/>
<rect x="685" y="337" width="120" height="38" fill="#000838"/>
<rect x="682" y="387" width="120" height="44" fill="#dcdcdc"/>
<rect x="685" y="390" width="120" height="38" fill="#000838"/>
<text x="720.70" y="414.00" font-size="14" font-weight="bold" fill="#ffffff" text-anchor="start" font-family='"Liberation Sans", sans-serif' textLength="32.1" lengthAdjust="spacingAndGlyphs" >Back</text>
<text x="722.20" y="351.50" font-size="14" font-weight="bold" fill="#ffffff" text-anchor="start" font-family='"Liberation Sans", sans-serif' textLength="33.7" lengthAdjust="spacingAndGlyphs" >Time</text>
<text x="691.90" y="370.50" font-size="14" font-weight="bold" fill="#ffffff" text-anchor="start" font-family='"Liberation Sans", sans-serif' textLength="89.9" lengthAdjust="spacingAndGlyphs" >Domain Scan</text>
<text x="691.70" y="472.90" font-size="24" font-weight="bold" fill="#80ff00" text-anchor="start" font-family='"Liberation Sans", sans-serif' textLength="51.8" lengthAdjust="spacingAndGlyphs" stroke="#80ff00" stroke-width="0.4">Pass</text>
<rect x="0" y="489" width="789" height="99" fill="#000000"/>
<rect x="0" y="489" width="1" height="99" fill="#ffffff"/>
<rect x="67" y="489" width="1" height="99" fill="#ffffff"/>
<rect x="120" y="489" width="1" height="99" fill="#ffffff"/>
<rect x="157" y="489" width="1" height="99" fill="#ffffff"/>
<rect x="210" y="489" width="1" height="99" fill="#ffffff"/>
<rect x="247" y="489" width="1" height="99" fill="#ffffff"/>
<rect x="300" y="489" width="1" height="99" fill="#ffffff"/>
<rect x="337" y="489" width="1" height="99" fill="#ffffff"/>
<rect x="390" y="489" width="1" height="99" fill="#ffffff"/>
<rect x="427" y="489" width="1" height="99" fill="#ffffff"/>
<rect x="480" y="489" width="1" height="99" fill="#ffffff"/>
<rect x="517" y="489" width="1" height="99" fill="#ffffff"/>
<rect x="570" y="489" width="1" height="99" fill="#ffffff"/>
<rect x="607" y="489" width="1" height="99" fill="#ffffff"/>
<rect x="660" y="489" width="1" height="99" fill="#ffffff"/>
<rect x="697" y="489" width="1" height="99" fill="#ffffff"/>
<rect x="750" y="489" width="1" height="99" fill="#ffffff"/>
<rect x="787" y="489" width="1" height="99" fill="#ffffff"/>
<rect x="0" y="489" width="788" height="1" fill="#ffffff"/>
<rect x="0" y="509" width="788" height="1" fill="#ffffff"/>
<rect x="0" y="529" width="788" height="1" fill="#ffffff"/>
<rect x="0" y="549" width="788" height="1" fill="#ffffff"/>
<rect x="0" y="569" width="788" height="1" fill="#ffffff"/>
<rect x="1" y="510" width="66" height="19" fill="#ff0000"/>
<rect x="248" y="510" width="52" height="19" fill="#0a78d7"/>
<text x="33.20" y="504.00" font-size="11" font-weight="normal" fill="#86cbf8" text-anchor="middle" font-family='"Liberation Sans", sans-serif' textLength="42.6" lengthAdjust="spacingAndGlyphs" >Analysis</text>
<text x="93.60" y="504.00" font-size="11" font-weight="normal" fill="#86cbf8" text-anchor="middle" font-family='"Liberation Sans", sans-serif' textLength="16.2" lengthAdjust="spacingAndGlyphs" >M1</text>
<text x="138.60" y="504.00" font-size="11" font-weight="normal" fill="#86cbf8" text-anchor="middle" font-family='"Liberation Sans", sans-serif' textLength="18.6" lengthAdjust="spacingAndGlyphs" >MG</text>
<text x="183.60" y="504.00" font-size="11" font-weight="normal" fill="#86cbf8" text-anchor="middle" font-family='"Liberation Sans", sans-serif' textLength="16.2" lengthAdjust="spacingAndGlyphs" >M2</text>
<text x="228.60" y="504.00" font-size="11" font-weight="normal" fill="#86cbf8" text-anchor="middle" font-family='"Liberation Sans", sans-serif' textLength="18.6" lengthAdjust="spacingAndGlyphs" >MG</text>
<text x="273.60" y="504.00" font-size="11" font-weight="normal" fill="#86cbf8" text-anchor="middle" font-family='"Liberation Sans", sans-serif' textLength="16.2" lengthAdjust="spacingAndGlyphs" >M3</text>
<text x="318.60" y="504.00" font-size="11" font-weight="normal" fill="#86cbf8" text-anchor="middle" font-family='"Liberation Sans", sans-serif' textLength="18.6" lengthAdjust="spacingAndGlyphs" >MG</text>
<text x="363.60" y="504.00" font-size="11" font-weight="normal" fill="#86cbf8" text-anchor="middle" font-family='"Liberation Sans", sans-serif' textLength="16.2" lengthAdjust="spacingAndGlyphs" >M4</text>
<text x="408.60" y="504.00" font-size="11" font-weight="normal" fill="#86cbf8" text-anchor="middle" font-family='"Liberation Sans", sans-serif' textLength="18.6" lengthAdjust="spacingAndGlyphs" >MG</text>
<text x="453.60" y="504.00" font-size="11" font-weight="normal" fill="#86cbf8" text-anchor="middle" font-family='"Liberation Sans", sans-serif' textLength="16.2" lengthAdjust="spacingAndGlyphs" >M5</text>
<text x="498.60" y="504.00" font-size="11" font-weight="normal" fill="#86cbf8" text-anchor="middle" font-family='"Liberation Sans", sans-serif' textLength="18.6" lengthAdjust="spacingAndGlyphs" >MG</text>
<text x="543.60" y="504.00" font-size="11" font-weight="normal" fill="#86cbf8" text-anchor="middle" font-family='"Liberation Sans", sans-serif' textLength="16.2" lengthAdjust="spacingAndGlyphs" >M6</text>
<text x="588.60" y="504.00" font-size="11" font-weight="normal" fill="#86cbf8" text-anchor="middle" font-family='"Liberation Sans", sans-serif' textLength="18.6" lengthAdjust="spacingAndGlyphs" >MG</text>
<text x="633.60" y="504.00" font-size="11" font-weight="normal" fill="#86cbf8" text-anchor="middle" font-family='"Liberation Sans", sans-serif' textLength="16.2" lengthAdjust="spacingAndGlyphs" >M7</text>
<text x="678.60" y="504.00" font-size="11" font-weight="normal" fill="#86cbf8" text-anchor="middle" font-family='"Liberation Sans", sans-serif' textLength="18.6" lengthAdjust="spacingAndGlyphs" >MG</text>
<text x="723.60" y="504.00" font-size="11" font-weight="normal" fill="#86cbf8" text-anchor="middle" font-family='"Liberation Sans", sans-serif' textLength="16.2" lengthAdjust="spacingAndGlyphs" >M8</text>
<text x="768.60" y="504.00" font-size="11" font-weight="normal" fill="#86cbf8" text-anchor="middle" font-family='"Liberation Sans", sans-serif' textLength="18.6" lengthAdjust="spacingAndGlyphs" >MG</text>
<text x="33.20" y="524.00" font-size="11" font-weight="normal" fill="#86cbf8" text-anchor="middle" font-family='"Liberation Sans", sans-serif' textLength="43.7" lengthAdjust="spacingAndGlyphs" >Freq(Hz)</text>
<text x="33.20" y="544.00" font-size="11" font-weight="normal" fill="#86cbf8" text-anchor="middle" font-family='"Liberation Sans", sans-serif' textLength="50.0" lengthAdjust="spacingAndGlyphs" >AV(dBuV)</text>
<text x="33.20" y="564.00" font-size="11" font-weight="normal" fill="#86cbf8" text-anchor="middle" font-family='"Liberation Sans", sans-serif' textLength="49.0" lengthAdjust="spacingAndGlyphs" >PK(dBuV)</text>
<text x="33.20" y="584.00" font-size="11" font-weight="normal" fill="#86cbf8" text-anchor="middle" font-family='"Liberation Sans", sans-serif' textLength="51.1" lengthAdjust="spacingAndGlyphs" >QP(dBuV)</text>
<text x="93.60" y="524.00" font-size="11" font-weight="normal" fill="#ffffff" text-anchor="middle" font-family='"Liberation Sans", sans-serif' textLength="15.2" lengthAdjust="spacingAndGlyphs" >1M</text>
<text x="93.60" y="544.00" font-size="11" font-weight="normal" fill="#ffffff" text-anchor="middle" font-family='"Liberation Sans", sans-serif' textLength="20.0" lengthAdjust="spacingAndGlyphs" >11.2</text>
<text x="138.60" y="544.00" font-size="11" font-weight="normal" fill="#0c900c" text-anchor="middle" font-family='"Liberation Sans", sans-serif' textLength="25.3" lengthAdjust="spacingAndGlyphs" >-34.8</text>
<text x="93.60" y="564.00" font-size="11" font-weight="normal" fill="#ffffff" text-anchor="middle" font-family='"Liberation Sans", sans-serif' textLength="20.5" lengthAdjust="spacingAndGlyphs" >20.6</text>
<text x="138.60" y="564.00" font-size="11" font-weight="normal" fill="#0c900c" text-anchor="middle" font-family='"Liberation Sans", sans-serif' textLength="25.3" lengthAdjust="spacingAndGlyphs" >-35.4</text>
<text x="183.60" y="524.00" font-size="11" font-weight="normal" fill="#ffffff" text-anchor="middle" font-family='"Liberation Sans", sans-serif' textLength="15.2" lengthAdjust="spacingAndGlyphs" >2M</text>
<text x="183.60" y="544.00" font-size="11" font-weight="normal" fill="#ffffff" text-anchor="middle" font-family='"Liberation Sans", sans-serif' textLength="20.0" lengthAdjust="spacingAndGlyphs" >13.2</text>
<text x="228.60" y="544.00" font-size="11" font-weight="normal" fill="#0c900c" text-anchor="middle" font-family='"Liberation Sans", sans-serif' textLength="25.3" lengthAdjust="spacingAndGlyphs" >-32.8</text>
<text x="183.60" y="564.00" font-size="11" font-weight="normal" fill="#ffffff" text-anchor="middle" font-family='"Liberation Sans", sans-serif' textLength="20.5" lengthAdjust="spacingAndGlyphs" >21.9</text>
<text x="228.60" y="564.00" font-size="11" font-weight="normal" fill="#0c900c" text-anchor="middle" font-family='"Liberation Sans", sans-serif' textLength="25.3" lengthAdjust="spacingAndGlyphs" >-34.1</text>
<text x="273.60" y="524.00" font-size="11" font-weight="normal" fill="#ffffff" text-anchor="middle" font-family='"Liberation Sans", sans-serif' textLength="15.2" lengthAdjust="spacingAndGlyphs" >3M</text>
<text x="273.60" y="544.00" font-size="11" font-weight="normal" fill="#ffffff" text-anchor="middle" font-family='"Liberation Sans", sans-serif' textLength="20.0" lengthAdjust="spacingAndGlyphs" >12.6</text>
<text x="318.60" y="544.00" font-size="11" font-weight="normal" fill="#0c900c" text-anchor="middle" font-family='"Liberation Sans", sans-serif' textLength="25.3" lengthAdjust="spacingAndGlyphs" >-33.4</text>
<text x="273.60" y="564.00" font-size="11" font-weight="normal" fill="#ffffff" text-anchor="middle" font-family='"Liberation Sans", sans-serif' textLength="20.5" lengthAdjust="spacingAndGlyphs" >23.3</text>
<text x="318.60" y="564.00" font-size="11" font-weight="normal" fill="#0c900c" text-anchor="middle" font-family='"Liberation Sans", sans-serif' textLength="25.3" lengthAdjust="spacingAndGlyphs" >-32.7</text>
<ellipse cx="12.4" cy="513" rx="8.2" ry="1.9" fill="none" stroke="#ff7070" stroke-width="0.8"/>
<polygon points="71.5,515.5 83.6,503.4 86,507 145,488.5 146,490.5 88,513 88,518" fill="#f04040"/></svg>
</body></html>
